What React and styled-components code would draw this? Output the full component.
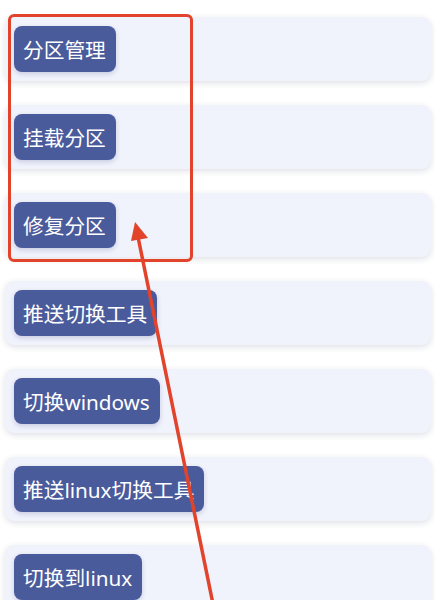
import React from "react";
import styled, { createGlobalStyle } from "styled-components";

const GlobalStyle = createGlobalStyle`
  html, body {
    margin: 0;
    padding: 0;
    background: #ffffff;
    font-family: "Noto Sans", "Noto Sans CJK SC", sans-serif;
  }
`;

const items = [
  "分区管理",
  "挂载分区",
  "修复分区",
  "推送切换工具",
  "切换windows",
  "推送linux切换工具",
  "切换到linux"
];

const App = () => {
  return (
    <>
      <GlobalStyle />
      <Page>
        <List>
          {items.map((label) => (
            <Card key={label}>
              <ActionButton>{label}</ActionButton>
            </Card>
          ))}
        </List>
        <Highlight />
        <Arrow width="435" height="600" viewBox="0 0 435 600">
          <line
            x1="213"
            y1="604"
            x2="137"
            y2="232"
            stroke="#e2432b"
            strokeWidth="3.5"
            strokeLinecap="round"
          />
          <polygon points="135,222 131,241 148,238" fill="#e2432b" />
        </Arrow>
      </Page>
    </>
  );
};

export default App;

const Page = styled.div`
  position: relative;
  width: 435px;
  height: 600px;
  overflow: hidden;
  padding: 17px 4px 0 5px;
  box-sizing: border-box;
`;

const List = styled.div`
  display: flex;
  flex-direction: column;
  gap: 24px;
`;

const Card = styled.div`
  display: flex;
  align-items: center;
  height: 64px;
  padding: 0 9px;
  box-sizing: border-box;
  background: #f0f2fc;
  border-radius: 9px;
  box-shadow: 0 2px 6px rgba(40, 50, 90, 0.15);
`;

const ActionButton = styled.div`
  display: flex;
  align-items: center;
  height: 46px;
  padding: 0 10px 0 9px;
  border-radius: 8px;
  background: #4a5b9b;
  color: #ffffff;
  font-size: 20.7px;
  white-space: nowrap;
  box-shadow: 0 2px 5px rgba(40, 50, 110, 0.2);
`;

const Highlight = styled.div`
  position: absolute;
  left: 8px;
  top: 14px;
  width: 185px;
  height: 248px;
  box-sizing: border-box;
  border: 3.5px solid #e2432b;
  border-radius: 6px;
  pointer-events: none;
`;

const Arrow = styled.svg`
  position: absolute;
  left: 0;
  top: 0;
  pointer-events: none;
`;
